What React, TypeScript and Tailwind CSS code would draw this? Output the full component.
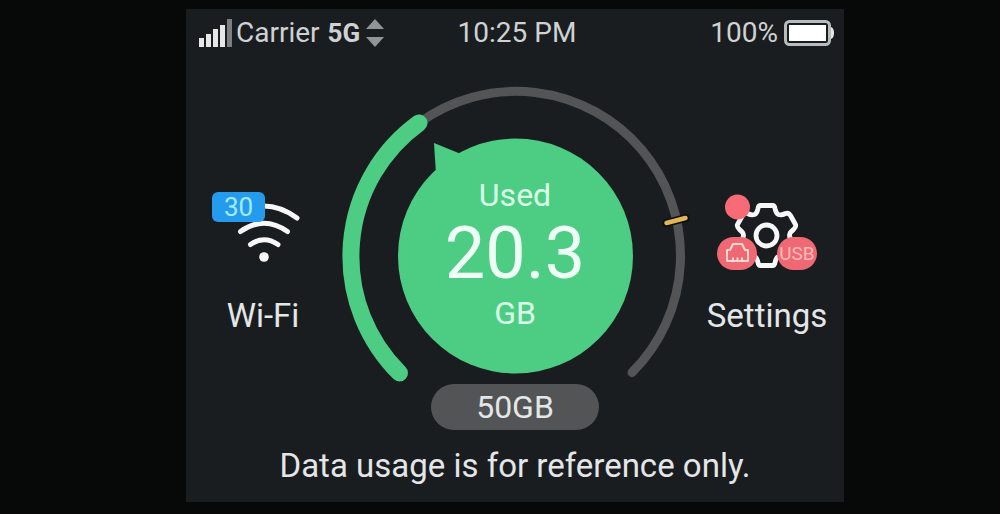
import React from "react";

// signal bars, tallest one is not lit
const bars = [
    { height: "h-[9px]", color: "bg-[#e6e8e8]" },
    { height: "h-[13px]", color: "bg-[#e6e8e8]" },
    { height: "h-[18px]", color: "bg-[#e6e8e8]" },
    { height: "h-[22px]", color: "bg-[#e6e8e8]" },
    { height: "h-7", color: "bg-[#7c7f81]" },
];

function StatusBar() {
    return (
        <header className="grid grid-cols-[1fr_auto_1fr] items-center h-12 pl-[13px] pr-[9px] text-[28px] leading-8 text-[#cfd2d3]">
            <div className="flex items-center gap-1">
                <div className="flex items-end gap-0.5">
                    {bars.map((bar) => (
                        <span key={bar.height} className={`w-[5px] ${bar.height} ${bar.color}`} />
                    ))}
                </div>
                <span>Carrier</span>
                <span className="ml-1 text-[26px] font-bold">5G</span>
                <svg className="ml-0.5 w-[18px] h-7" viewBox="0 0 18 28" fill="#929596">
                    <path d="M9 0L18 10H0Z" />
                    <path d="M9 28L18 18H0Z" />
                </svg>
            </div>
            <time>10:25 PM</time>
            <div className="flex items-center justify-end gap-1.5">
                <span>100%</span>
                <svg className="w-[51px] h-[26px]" viewBox="0 0 51 26">
                    <rect x="1.5" y="1.5" width="44" height="23" rx="4" fill="none" stroke="#b9bcbd" strokeWidth="3" />
                    <rect x="5" y="5" width="37" height="16" fill="#ffffff" />
                    <path d="M47 7Q50 8 50 13T47 19Z" fill="#e6e8e8" />
                </svg>
            </div>
        </header>
    );
}

function WifiButton() {
    return (
        <button type="button" className="flex flex-col items-center gap-6 mt-[108px]">
            <span className="relative">
                <svg className="w-[104px] h-[88px]" viewBox="0 0 104 88" fill="none" stroke="#f7f7f7" strokeWidth="5" strokeLinecap="round">
                    <path d="M19 30Q53 6 86 30" />
                    <path d="M29.5 43.5Q53 27 76.5 43.5" />
                    <path d="M39.5 56.5Q53 47 67 56.5" />
                    <circle cx="53" cy="69" r="4.8" fill="#f7f7f7" stroke="none" />
                </svg>
                <span className="absolute left-px top-1 w-[53px] h-[30px] rounded-md bg-[#259bed] text-[26px] leading-[30px] text-[#a4ebf8]">
                    30
                </span>
            </span>
            <span>Wi-Fi</span>
        </button>
    );
}

function SettingsButton() {
    return (
        <button type="button" className="flex flex-col items-center gap-6 mt-[108px]">
            <span className="relative">
                <svg className="w-[104px] h-[88px]" viewBox="0 0 104 88" fill="none">
                    <g transform="translate(51.5 47.5)" stroke="#f7f7f7" strokeWidth="4.8" strokeLinejoin="round">
                        <path d="M-6 -30H6Q8 -30 8.5 -27Q9.5 -22 12 -21Q15 -20 19 -22Q22 -23 24 -20L29 -11Q30 -9 27 -6Q23 -3 23 0Q23 3 27 6Q30 9 29 11L24 20Q22 23 19 22Q15 20 12 21Q9.5 22 8.5 27Q8 30 6 30H-6Q-8 30 -8.5 27Q-9.5 22 -12 21Q-15 20 -19 22Q-22 23 -24 20L-29 11Q-30 9 -27 6Q-23 3 -23 0Q-23 -3 -27 -6Q-30 -9 -29 -11L-24 -20Q-22 -23 -19 -22Q-15 -20 -12 -21Q-9.5 -22 -8.5 -27Q-8 -30 -6 -30Z" />
                        <circle r="10.5" />
                    </g>
                    <circle cx="22.5" cy="19" r="12.5" fill="#f66b75" />
                    <rect x="2" y="49" width="40" height="33" rx="16.5" fill="#ee6973" />
                    <path d="M12 73V62H15L18 56H27L30 62H33V73H12ZM18 73V69.5M22.5 73V69.5M27 73V69.5" stroke="#ffd9cf" strokeWidth="2" strokeLinejoin="round" />
                </svg>
                <span className="absolute left-[62px] top-[49px] w-10 h-[33px] rounded-full bg-[#ee6973] text-center text-[19px] leading-[33px] text-[#ffb9b9]">
                    USB
                </span>
            </span>
            <span>Settings</span>
        </button>
    );
}

function UsageGauge() {
    return (
        <div className="flex flex-col items-center text-[32px]">
            <div className="relative">
                <svg className="w-[350px] h-[304px]" viewBox="0 0 350 304" fill="none" strokeLinecap="round">
                    {/* track */}
                    <path d="M79 43A164.5 164.5 0 0 1 292 292.5" stroke="#535456" strokeWidth="9" />
                    {/* used part */}
                    <path d="M59.5 293A164.5 164.5 0 0 1 79 43" stroke="#4ccd83" strokeWidth="17" />
                    {/* warning mark */}
                    <path d="M326.5 143L345.5 138" stroke="#0d0d0d" strokeWidth="8" />
                    <path d="M326.5 143L345.5 138" stroke="#e2b657" strokeWidth="4.5" />
                    <path d="M94 63L121 74L96 94Z" fill="#4ccd83" />
                    <circle cx="175.5" cy="176" r="117.5" fill="#4ccd83" />
                </svg>
                <div className="absolute inset-x-0 top-[99px] text-center text-[#d9ffe8]">
                    <div>Used</div>
                    <div className="text-[72px] leading-[86px] text-[#eefff5]">20.3</div>
                    <div>GB</div>
                </div>
            </div>
            <div className="w-[168px] rounded-full bg-[#535455] text-center leading-[46px]">50GB</div>
        </div>
    );
}

function App() {
    return (
        <div className="min-h-screen pt-[9px] pb-3 pl-[30px] bg-[#070808]">
            <div className="w-full max-w-[658px] mx-auto bg-[#1a1d20] font-['Roboto',sans-serif] text-[#e4e6e7]">
                <StatusBar />
                <main className="grid grid-cols-[1fr_auto_1fr] items-start pt-[23px] text-[33px] leading-8">
                    <WifiButton />
                    <UsageGauge />
                    <SettingsButton />
                </main>
                <p className="text-center text-[33px] leading-[72px]">Data usage is for reference only.</p>
            </div>
        </div>
    );
}

export default App;
